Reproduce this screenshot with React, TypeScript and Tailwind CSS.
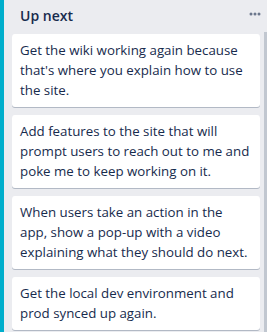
const cards = [
  "Get the wiki working again because that's where you explain how to use the site.",
  "Add features to the site that will prompt users to reach out to me and poke me to keep working on it.",
  "When users take an action in the app, show a pop-up with a video explaining what they should do next.",
  "Get the local dev environment and prod synced up again.",
];

export default function App() {
  return (
    <div
      className="flex h-[332px] w-[267px] overflow-hidden bg-[#ebecf0] text-[#172b4d]"
      style={{ fontFamily: '"Open Sans", "Noto Sans", sans-serif' }}
    >
      <div className="w-1 shrink-0 bg-[#00aecc]" />
      <div className="flex min-w-0 flex-1 flex-col">
        {/* List header */}
        <div className="flex h-[34px] shrink-0 items-center justify-between pb-[4px] pl-4 pr-[6px]">
          <h2 className="text-[14px] font-semibold">Up next</h2>
          <svg width="12" height="4" viewBox="0 0 12 4" className="mb-[2px] fill-[#6b778c]">
            <circle cx="2" cy="2" r="1.5" />
            <circle cx="6" cy="2" r="1.5" />
            <circle cx="10" cy="2" r="1.5" />
          </svg>
        </div>
        <div className="flex min-h-0 flex-1">
          <div className="flex flex-1 flex-col gap-2 pl-2 pr-1">
            {cards.map((text) => (
              <div
                key={text}
                className="shrink-0 rounded-[3px] bg-white px-2 pb-[7px] pt-[6px] text-[13.3px] leading-5 shadow-[0_1px_0_rgba(9,30,66,0.25)]"
              >
                {text}
              </div>
            ))}
          </div>
          <div className="mt-[-2px] w-[3px] shrink-0 bg-[#c1c7d0]" />
        </div>
      </div>
    </div>
  );
}
